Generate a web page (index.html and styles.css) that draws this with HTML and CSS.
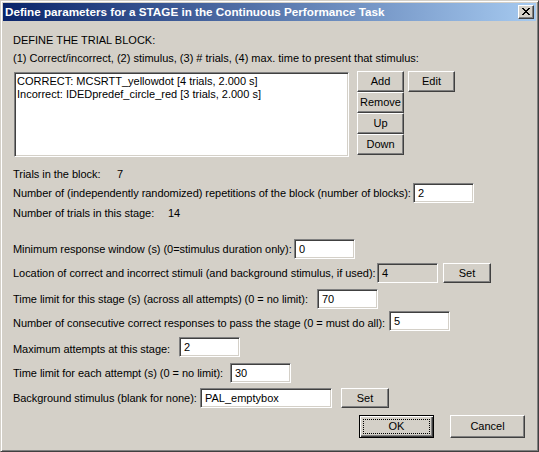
FILE: index.html
```html
<!DOCTYPE html>
<html>
<head>
<meta charset="utf-8">
<title>Define parameters for a STAGE</title>
<link rel="stylesheet" href="styles.css">
</head>
<body>
<div class="window">
  <div class="titlebar">
    <span class="title">Define parameters for a STAGE in the Continuous Performance Task</span>
    <span class="close"><svg width="8" height="7" viewBox="0 0 8 7" shape-rendering="crispEdges"><path fill="#000" d="M0 0h2v1h-2z M6 0h2v1h-2z M1 1h2v1h-2z M5 1h2v1h-2z M2 2h4v1h-4z M3 3h2v1h-2z M2 4h4v1h-4z M1 5h2v1h-2z M5 5h2v1h-2z M0 6h2v1h-2z M6 6h2v1h-2z"/></svg></span>
  </div>
  <div class="client">
    <div class="line">DEFINE THE TRIAL BLOCK:</div>
    <div class="line mt5">(1) Correct/incorrect, (2) stimulus, (3) # trials, (4) max. time to present that stimulus:</div>
    <div class="block-row">
      <div class="listbox">
        <div class="item">CORRECT: MCSRTT_yellowdot [4 trials, 2.000 s]</div>
        <div class="item">Incorrect: IDEDpredef_circle_red [3 trials, 2.000 s]</div>
      </div>
      <div class="btn-col">
        <div class="btn">Add</div>
        <div class="btn">Remove</div>
        <div class="btn">Up</div>
        <div class="btn">Down</div>
      </div>
      <div class="btn edit">Edit</div>
    </div>
    <div class="line stat mt11"><span class="lbl w104">Trials in the block:</span><span>7</span></div>
    <div class="field mt2"><span class="lbl w400">Number of (independently randomized) repetitions of the block (number of blocks):</span><span class="input">2</span></div>
    <div class="line stat mt4"><span class="lbl w155">Number of trials in this stage:</span><span>14</span></div>
    <div class="field mt19"><span class="lbl w281">Minimum response window (s) (0=stimulus duration only):</span><span class="input">0</span></div>
    <div class="field mt4"><span class="lbl w364">Location of correct and incorrect stimuli (and background stimulus, if used):</span><span class="input disabled">4</span><span class="btn set">Set</span></div>
    <div class="field mt6"><span class="lbl w304">Time limit for this stage (s) (across all attempts) (0 = no limit):</span><span class="input">70</span></div>
    <div class="field mt2"><span class="lbl w376 low">Number of consecutive correct responses to pass the stage (0 = must do all):</span><span class="input">5</span></div>
    <div class="field mt6"><span class="lbl w166 low">Maximum attempts at this stage:</span><span class="input">2</span></div>
    <div class="field mt6"><span class="lbl w217">Time limit for each attempt (s) (0 = no limit):</span><span class="input">30</span></div>
    <div class="field mt5"><span class="lbl w187">Background stimulus (blank for none):</span><span class="input wide">PAL_emptybox</span><span class="btn set set2">Set</span></div>
    <div class="actions">
      <span class="btn action default">OK</span>
      <span class="btn action">Cancel</span>
    </div>
  </div>
</div>
</body>
</html>
```
FILE: styles.css
```css
html, body {
  margin: 0;
  padding: 0;
  background: #d4d0c8;
}
body {
  font-family: "Liberation Sans", Arial, sans-serif;
  font-size: 11px;
  color: #000;
}
.window {
  width: 539px;
  height: 452px;
  box-sizing: border-box;
  border: 1px solid;
  border-color: #d4d0c8 #404040 #404040 #d4d0c8;
  box-shadow: inset 1px 1px #fff, inset -1px -1px #808080;
  padding: 2px;
  background: #d4d0c8;
  display: flex;
  flex-direction: column;
}
.titlebar {
  height: 18px;
  flex: none;
  display: flex;
  align-items: center;
  justify-content: space-between;
  padding: 0 2px;
  background: linear-gradient(to right, #0a246a, #a6caf0);
  color: #fff;
  font-weight: bold;
  white-space: nowrap;
}
.title {
  font-size: 11.7px;
  line-height: 18px;
}
.close {
  width: 16px;
  height: 14px;
  box-sizing: border-box;
  background: #d4d0c8;
  border: 1px solid;
  border-color: #fff #404040 #404040 #fff;
  box-shadow: inset -1px -1px #808080;
  padding: 2px 0 0 3px;
  display: block;
}
.close svg {
  display: block;
}
.client {
  flex: 1;
  padding: 13px 11px 0 10px;
}
.line {
  height: 13px;
  line-height: 13px;
  white-space: nowrap;
}
.stat {
  display: flex;
}
.mt2 { margin-top: 2px; }
.mt4 { margin-top: 4px; }
.mt5 { margin-top: 5px; }
.mt6 { margin-top: 6px; }
.mt11 { margin-top: 11px; }
.mt19 { margin-top: 19px; }

.block-row {
  display: flex;
  align-items: flex-start;
  margin-top: 6px;
}
.listbox {
  width: 335px;
  height: 85px;
  box-sizing: border-box;
  margin: 1px 0 0 1px;
  background: #fff;
  border: 1px solid;
  border-color: #808080 #fff #fff #808080;
  box-shadow: inset 1px 1px #404040, inset -1px -1px #d4d0c8;
  padding: 2px;
}
.item {
  line-height: 13px;
  white-space: nowrap;
}
.btn-col {
  display: flex;
  flex-direction: column;
  margin-left: 8px;
}
.btn {
  width: 47px;
  height: 21px;
  box-sizing: border-box;
  display: flex;
  align-items: center;
  justify-content: center;
  background: #d4d0c8;
  border: 1px solid;
  border-color: #fff #404040 #404040 #fff;
  box-shadow: inset -1px -1px #808080;
  line-height: 13px;
  white-space: nowrap;
}
.edit {
  margin-left: 4px;
}

.field {
  display: flex;
  align-items: center;
  height: 20px;
  white-space: nowrap;
}
.lbl {
  flex: none;
  line-height: 13px;
  white-space: nowrap;
  letter-spacing: -0.04px;
}
.low { padding-top: 4px; }
.w104 { width: 104px; }
.w155 { width: 155px; }
.w166 { width: 166px; }
.w187 { width: 187px; }
.w217 { width: 217px; }
.w281 { width: 281px; }
.w304 { width: 304px; }
.w364 { width: 364px; }
.w376 { width: 376px; }
.w400 { width: 400px; }

.input {
  flex: none;
  width: 61px;
  height: 20px;
  box-sizing: border-box;
  background: #fff;
  border: 1px solid;
  border-color: #808080 #fff #fff #808080;
  box-shadow: inset 1px 1px #404040, inset -1px -1px #d4d0c8;
  padding: 0 0 0 4px;
  line-height: 18px;
}
.input.disabled {
  background: #d4d0c8;
}
.input.wide {
  width: 132px;
}
.set {
  width: 48px;
  height: 20px;
  margin-left: 5px;
}
.set2 {
  margin-left: 9px;
}

.actions {
  display: flex;
  justify-content: flex-end;
  gap: 16px;
  margin-top: 7px;
}
.action {
  width: 75px;
  height: 23px;
}
.default {
  border-color: #000;
  box-shadow: inset 1px 1px #fff, inset -1px -1px #404040, inset -2px -2px #808080;
  outline: 1px dotted #000;
  outline-offset: -5px;
}
```
